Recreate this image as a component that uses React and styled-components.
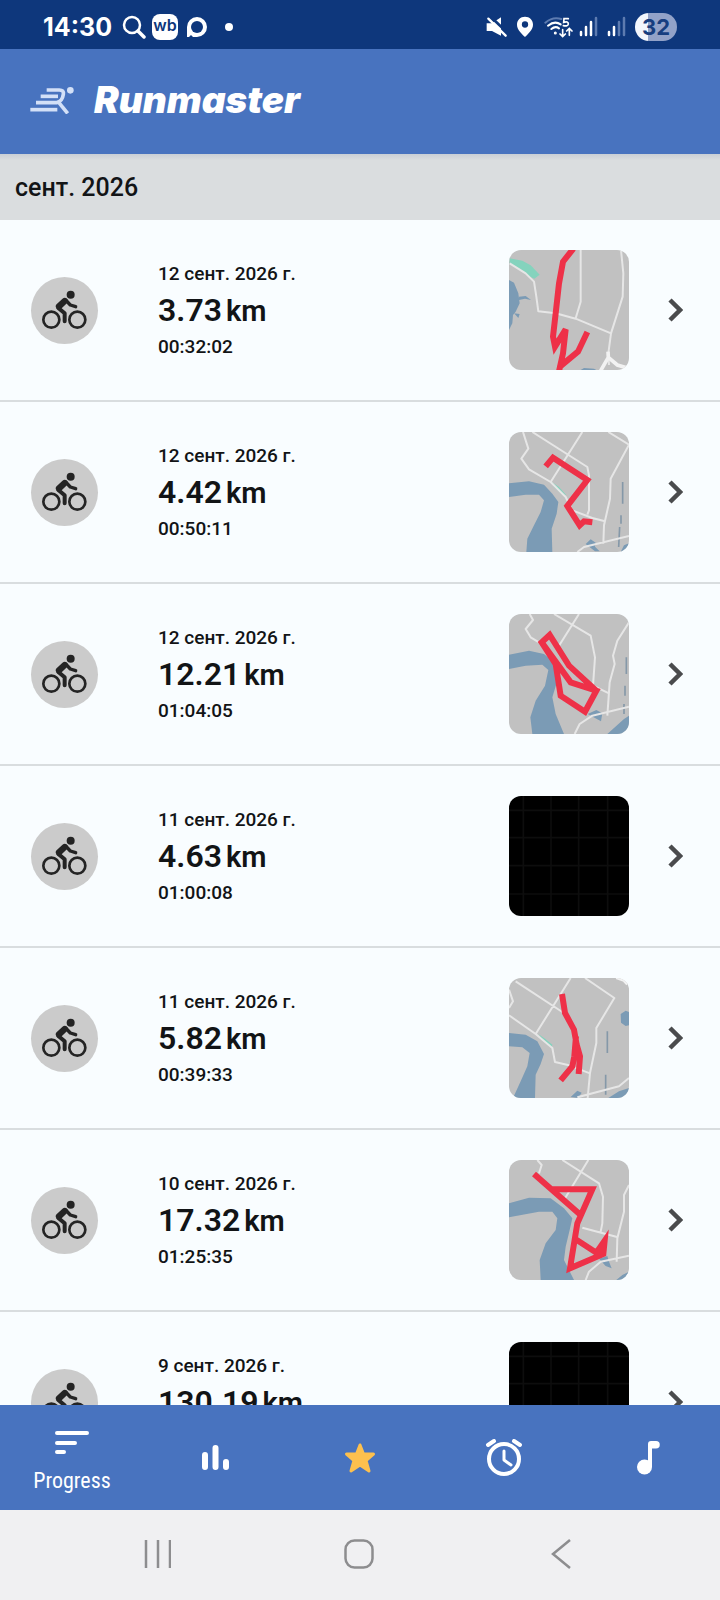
import React from 'react';
import styled, { createGlobalStyle } from 'styled-components';

const activities = [
  {
    id: 1, date: '12 сент. 2026 г.', distance: '3.73', time: '00:32:02', map: 'north',
  },
  {
    id: 2, date: '12 сент. 2026 г.', distance: '4.42', time: '00:50:11', map: 'river',
  },
  {
    id: 3, date: '12 сент. 2026 г.', distance: '12.21', time: '01:04:05', map: 'loop',
  },
  {
    id: 4, date: '11 сент. 2026 г.', distance: '4.63', time: '01:00:08', map: null,
  },
  {
    id: 5, date: '11 сент. 2026 г.', distance: '5.82', time: '00:39:33', map: 'fork',
  },
  {
    id: 6, date: '10 сент. 2026 г.', distance: '17.32', time: '01:25:35', map: 'zigzag',
  },
  {
    id: 7, date: '9 сент. 2026 г.', distance: '130.19', time: '', map: null,
  },
];

// every map is drawn on a 360x360 grid
const maps = {
  north: {
    water: 'M0 90L15 98L28 130L32 160L20 185L12 195L10 220L0 240ZM30 140L50 138L66 150L48 146L30 150ZM15 190L32 192L28 204ZM215 360L225 354L255 356L262 360Z',
    park: 'M2 25L40 32L65 46L92 74L76 86L58 78L30 55L2 40Z',
    roads: 'M2 40L50 70L75 95L82 140L88 184L140 190L200 206L306 250M215 0V155L200 205M336 0L343 70L341 140L306 250L298 310L300 345',
    wide: 'M297 305L298 322L275 362M298 322L325 345L362 356',
    route: 'M193 -4L162 35L150 100L140 190L132 260L138 290L170 238L162 310L150 364M150 352L207 305L235 246',
  },
  river: {
    water: 'M0 154L60 148L105 158L130 185L148 210L143 245L128 290L130 360L52 360L55 320L75 280L95 240L105 205L90 188L50 188L0 195ZM335 360L345 340L360 334V360ZM230 336L245 322L260 332L258 344L272 358L258 358Z',
    park: 'M128 150L150 165L172 190L158 186L135 165Z',
    roads: 'M42 0L58 50L37 80L60 112L125 150L170 195L190 235L250 258L288 268M70 0L235 105L240 130V235L235 248M220 0L125 150M298 0L360 38L305 140L303 200L285 280L283 335M205 360L225 345L360 312',
    stream: 'M341 150V215M336 250V275M332 285L329 345',
    route: 'M110 103L132 77L235 144L175 222L212 280L225 268L250 271',
  },
  loop: {
    water: 'M0 122L60 110L105 120L135 145L145 200L130 250L140 300L165 360L70 360L64 310L80 260L108 215L118 168L100 152L50 155L0 165ZM295 360L345 315L360 305V360ZM236 300L262 288L280 298L276 322L262 314Z',
    roads: 'M62 0L72 18L50 45L65 70L95 88M135 0L245 65L258 130L252 215L300 238M210 0L150 95M360 25L325 80L312 125L317 150L302 205L295 305M197 360L212 330L250 305L360 278',
    stream: 'M352 130V180M348 215V245M345 270V300',
    route: 'M98 85L140 150L155 245L228 293L262 230L185 205L98 85L122 63L180 155L262 230',
  },
  fork: {
    water: 'M0 165L50 170L85 190L105 228L95 258L80 290L78 360L12 360L35 310L55 265L62 225L40 208L0 205ZM335 108L350 98L360 102V142L350 144L336 134ZM298 360L330 340L360 330V360ZM185 357L205 338L218 344L208 360Z',
    park: 'M88 168L108 182L130 200L128 208L110 196Z',
    roads: 'M20 10L160 102M185 0L80 168M0 112L80 168L130 210L138 252L180 262L245 287M228 0L316 60L262 150V195L243 285L236 360M205 358L330 325L360 300M0 35L12 70L0 90',
    wide: 'M322 -2L345 6L356 18',
    stream: 'M295 160V225M290 290V350',
    route: 'M159 48L168 105L195 155L203 200L213 235L209 288M201 175L196 235L190 265L155 307',
  },
  zigzag: {
    water: 'M0 130L60 113L125 115L165 145L190 175L182 210L170 260L165 300L195 360L95 360L92 300L110 250L140 210L145 175L130 155L90 155L0 172ZM322 360L340 345L360 335V360ZM270 296L295 288L300 305L308 325L290 318Z',
    roads: 'M85 0L98 15L90 40M160 0L270 70L282 110L280 190L275 215M238 0L165 120M220 203L327 232M360 75L345 105V155L325 235L323 305M230 360L240 335L275 305L360 287',
    route: 'M75 42L215 165M130 88H250L205 190L183 325L283 282L287 242L262 278L200 238M262 275L283 258',
  },
};

function MapPreview({ name }) {
  const map = maps[name];
  if (!map) {
    return (
      <Thumb viewBox="0 0 360 360" aria-hidden="true">
        <rect width="360" height="360" />
        <path d="M43 0V360M126 0V360M209 0V360M296 0V360M0 43H360M0 125H360M0 209H360M0 294H360" stroke="#0d0d0d" strokeWidth="5" />
      </Thumb>
    );
  }
  return (
    <Thumb viewBox="0 0 360 360" fill="none" aria-hidden="true">
      <rect width="360" height="360" fill="#c1c1c1" />
      <path d={map.water} fill="#7b9bb5" />
      {map.park && <path d={map.park} fill="#84d3bd" />}
      {map.stream && <path d={map.stream} stroke="#8598a8" strokeWidth="5" />}
      <path d={map.roads} stroke="#e6e6e6" strokeWidth="6" strokeLinejoin="round" />
      {map.wide && <path d={map.wide} stroke="#f2f2f2" strokeWidth="11" />}
      <path d={map.route} stroke="#ee3148" strokeWidth="18" strokeLinejoin="miter" />
    </Thumb>
  );
}

function BikeIcon() {
  return (
    <svg width="67" height="67" viewBox="0 0 201 201" fill="none" stroke="#242424" strokeLinecap="round" strokeLinejoin="round" aria-hidden="true">
      <circle cx="119" cy="53" r="12" fill="#242424" stroke="none" />
      <g strokeWidth="8">
        <circle cx="61" cy="128" r="24" />
        <circle cx="139" cy="128" r="24" />
      </g>
      <path d="M84 88L101 72" strokeWidth="19" />
      <path d="M104 69L118 84L134 89" strokeWidth="10" />
      <path d="M82 93L101 109V133" strokeWidth="12" />
    </svg>
  );
}

function LogoMark() {
  return (
    <svg width="45" height="28" viewBox="90 262 135 84" fill="none" stroke="#d3e0f7" strokeWidth="11" aria-hidden="true">
      <path d="M140 274H178Q192 274 190 287Q187 309 170 312H108" />
      <path d="M122 293H174" />
      <path d="M91 333H172" />
      <path d="M176 311L203 344" />
      <circle cx="211" cy="275" r="10" fill="#d3e0f7" stroke="none" />
    </svg>
  );
}

function Signal({ level }) {
  const bars = ['M3 33V36', 'M8 28V36', 'M13 23V36', 'M18 19V36'];
  return (
    <svg width="22" height="28" viewBox="1 14 22 28" strokeWidth="2.5" strokeLinecap="round" aria-hidden="true">
      {bars.map((d, i) => (
        <path key={d} d={d} stroke={i < level ? '#fff' : '#5d7bb0'} />
      ))}
    </svg>
  );
}

function StatusBar() {
  return (
    <Status>
      <StatusGroup>
        <Clock>14:30</Clock>
        <svg width="28" height="28" viewBox="-5 0 28 28" fill="none" stroke="#fff" strokeLinecap="round" aria-hidden="true">
          <circle cx="9" cy="12" r="8" strokeWidth="2.5" />
          <path d="M15 18L21 24" strokeWidth="3.5" />
        </svg>
        <AppBadge>wb</AppBadge>
        <svg width="26" height="26" viewBox="0 0 26 26" aria-hidden="true">
          <path d="M3 23V13a10 10 0 1 1 10 10H9L7 21L5 23Z" fill="#fff" />
          <circle cx="13" cy="13" r="6" fill="#0e377c" />
        </svg>
        <svg width="26" height="26" viewBox="0 0 26 26" aria-hidden="true">
          <circle cx="13" cy="13" r="4" fill="#fff" />
        </svg>
      </StatusGroup>
      <StatusGroup>
        <svg width="24" height="22" viewBox="378 49 72 66" aria-hidden="true">
          <path d="M380 71H396L423 53V108L396 94H380Z" fill="#fff" />
          <path d="M392 51L447 104" stroke="#0e377c" strokeWidth="8" />
          <path d="M385 57L437 108" stroke="#fff" strokeWidth="7" strokeLinecap="round" />
        </svg>
        <svg width="22" height="22" viewBox="468 49 66 66" aria-hidden="true">
          <path d="M495 51C481 51 471 61 471 75C471 91 487 103 495 112C503 103 519 91 519 75C519 61 509 51 495 51ZM495 65A9 9 0 1 1 495 84A9 9 0 1 1 495 65Z" fill="#fff" fillRule="evenodd" />
        </svg>
        <svg width="29" height="22" viewBox="554 49 87 66" fill="none" stroke="#fff" strokeWidth="6" strokeLinecap="round" aria-hidden="true">
          <path d="M558 69Q580 50 606 58" stroke="#5d7bb0" />
          <path d="M566 78Q586 62 604 74" />
          <path d="M576 88Q588 78 599 86" />
          <circle cx="588" cy="100" r="2" strokeWidth="5" />
          <path d="M610 90V109M602 103L610 111L618 103M630 107V89M622 94L630 86L638 94" strokeWidth="5" />
          <path d="M627 57H614L613 68Q627 64 627 73Q626 81 612 78" strokeWidth="5" />
        </svg>
        <Signal level={3} />
        <Signal level={2} />
        <Battery>32</Battery>
      </StatusGroup>
    </Status>
  );
}

function ActivityRow({ activity }) {
  return (
    <Row>
      <RowLink href={`#activity-${activity.id}`}>
        <Sport>
          <BikeIcon />
        </Sport>
        <Summary>
          <Small>{activity.date}</Small>
          <Distance>
            {activity.distance}
            <Unit>km</Unit>
          </Distance>
          <Small>{activity.time}</Small>
        </Summary>
        <MapPreview name={activity.map} />
        <svg width="15" height="24" viewBox="0 0 15 24" fill="none" stroke="#4a4b4d" strokeWidth="4.5" aria-hidden="true">
          <path d="M2 2L12 12L2 22" />
        </svg>
      </RowLink>
    </Row>
  );
}

export default function App() {
  return (
    <Screen>
      <GlobalStyle />
      <StatusBar />
      <Header>
        <LogoMark />
        <Title>Runmaster</Title>
      </Header>
      <Month>сент. 2026</Month>
      <List>
        {activities.map((activity) => (
          <ActivityRow key={activity.id} activity={activity} />
        ))}
      </List>
      <TabBar>
        <Tab type="button" aria-current="page">
          <svg width="34" height="24" viewBox="0 0 34 24" stroke="#fff" strokeWidth="4" strokeLinecap="round" aria-hidden="true">
            <path d="M2 2H32M2 12H20M2 21H9" />
          </svg>
          <TabLabel>Progress</TabLabel>
        </Tab>
        <Tab type="button" aria-label="Statistics">
          <svg width="28" height="28" viewBox="0 0 28 28" stroke="#fff" strokeWidth="6" strokeLinecap="round" aria-hidden="true">
            <path d="M3 11V23M13.5 4V23M24 18V23" />
          </svg>
        </Tab>
        <Tab type="button" aria-label="Favorites">
          <svg width="32" height="32" viewBox="0 0 32 32" fill="#fdc04e" stroke="#fdc04e" strokeWidth="3" strokeLinejoin="round" aria-hidden="true">
            <path d="M16 3L19.5 12H29.5L22 18.5L25 29L16 23L7 29L10 18.5L2.5 12H12.5Z" />
          </svg>
        </Tab>
        <Tab type="button" aria-label="Reminders">
          <svg width="38" height="38" viewBox="0 0 38 38" fill="none" stroke="#fff" strokeWidth="4" strokeLinecap="round" aria-hidden="true">
            <circle cx="19" cy="20" r="15" />
            <path d="M3 6L9 2M35 6L29 2" />
            <path d="M19 12V21L26 26" strokeWidth="3" strokeLinejoin="round" />
          </svg>
        </Tab>
        <Tab type="button" aria-label="Music">
          <svg width="24" height="36" viewBox="0 0 24 36" aria-hidden="true">
            <circle cx="8.5" cy="27" r="7.5" fill="#fff" />
            <path d="M12 27V4Q12 1 15 1H20A3.5 3.5 0 0 1 20 8.5H16V27Z" fill="#fff" />
          </svg>
        </Tab>
      </TabBar>
      <SystemBar>
        <SystemButton type="button" aria-label="Recent apps">
          <svg width="28" height="30" viewBox="0 0 28 30" stroke="#8d8d8f" strokeWidth="2.5" aria-hidden="true">
            <path d="M3 1V29M15 1V29M27 1V29" />
          </svg>
        </SystemButton>
        <SystemButton type="button" aria-label="Home">
          <svg width="30" height="30" viewBox="0 0 30 30" fill="none" stroke="#8d8d8f" strokeWidth="2.5" aria-hidden="true">
            <rect x="1.5" y="1.5" width="27" height="27" rx="9" />
          </svg>
        </SystemButton>
        <SystemButton type="button" aria-label="Back">
          <svg width="20" height="30" viewBox="0 0 20 30" fill="none" stroke="#8d8d8f" strokeWidth="2.5" aria-hidden="true">
            <path d="M19 1L2 15L19 29" />
          </svg>
        </SystemButton>
      </SystemBar>
    </Screen>
  );
}

const GlobalStyle = createGlobalStyle`
  * {
    box-sizing: border-box;
  }
  body {
    margin: 0;
    font-family: Roboto, 'Noto Sans', sans-serif;
    color: #121416;
    background: #f9fdff;
  }
  svg {
    display: block;
    flex-shrink: 0;
  }
  button {
    padding: 0;
    border: 0;
    background: none;
    font: inherit;
    color: inherit;
  }
`;

const Screen = styled.div`
  display: flex;
  flex-direction: column;
  height: 100vh;
`;

const Status = styled.div`
  display: flex;
  align-items: center;
  justify-content: space-between;
  flex-shrink: 0;
  height: 49px;
  padding: 4px 43px 0;
  background: #0e377c;
  color: #fff;
`;

const StatusGroup = styled.div`
  display: flex;
  align-items: center;
  gap: 6px;
`;

const Clock = styled.time`
  font: 700 25px/28px Inter, sans-serif;
`;

const AppBadge = styled.span`
  width: 26px;
  height: 26px;
  border-radius: 8px;
  background: #fff;
  color: #0e377c;
  font: 600 16px/23px Inter, sans-serif;
  text-align: center;
`;

const Battery = styled.span`
  width: 42px;
  height: 28px;
  border-radius: 14px;
  background: linear-gradient(90deg, #f2f6fd 13px, #92a2c8 13px);
  color: #173e7f;
  font: 700 22px/28px Inter, sans-serif;
  text-align: center;
`;

const Header = styled.header`
  display: flex;
  align-items: center;
  gap: 19px;
  flex-shrink: 0;
  height: 105px;
  padding: 0 30px 3px;
  background: #4873bf;
  color: #fff;
`;

const Title = styled.h1`
  margin: 0;
  font: italic 900 37px/48px Inter, sans-serif;
`;

const Month = styled.h2`
  flex-shrink: 0;
  margin: 0;
  padding: 2px 15px 0;
  background: linear-gradient(#c9cfd6, #dadddf 6px);
  font-size: 25px;
  font-weight: 500;
  line-height: 64px;
`;

const List = styled.ul`
  flex: 1;
  min-height: 0;
  margin: 0;
  padding: 0;
  overflow: hidden;
  list-style: none;
`;

const Row = styled.li`
  border-bottom: 2px solid #d9dddf;
`;

const RowLink = styled.a`
  display: flex;
  align-items: center;
  padding: 30px 37px 30px 31px;
  color: inherit;
  text-decoration: none;
`;

const Sport = styled.span`
  margin-right: 60px;
  border-radius: 50%;
  background: #cbcbcb;
`;

const Summary = styled.div`
  flex: 1;
`;

const Small = styled.div`
  height: 34px;
  font-size: 19px;
  font-weight: 500;
  line-height: 34px;
`;

const Distance = styled.div`
  font-size: 32px;
  font-weight: 600;
  line-height: 38px;
`;

const Unit = styled.span`
  margin-left: 4px;
  font-size: 29px;
`;

const Thumb = styled.svg`
  width: 120px;
  height: 120px;
  margin-right: 39px;
  border-radius: 12px;
`;

const TabBar = styled.nav`
  display: grid;
  grid-template-columns: repeat(5, 1fr);
  flex-shrink: 0;
  height: 105px;
  background: #4873bf;
  color: #fff;
`;

const Tab = styled.button`
  display: flex;
  flex-direction: column;
  align-items: center;
  justify-content: center;
  gap: 10px;

  &[aria-current] {
    padding-top: 12px;
  }
`;

const TabLabel = styled.span`
  font-family: 'Roboto Condensed', Roboto, sans-serif;
  font-size: 22px;
  line-height: 32px;
`;

const SystemBar = styled.div`
  display: grid;
  grid-template-columns: repeat(3, 1fr);
  flex-shrink: 0;
  height: 90px;
  padding: 0 58px 2px 56px;
  background: #f0f0f2;
`;

const SystemButton = styled.button`
  display: flex;
  align-items: center;
  justify-content: center;
`;
